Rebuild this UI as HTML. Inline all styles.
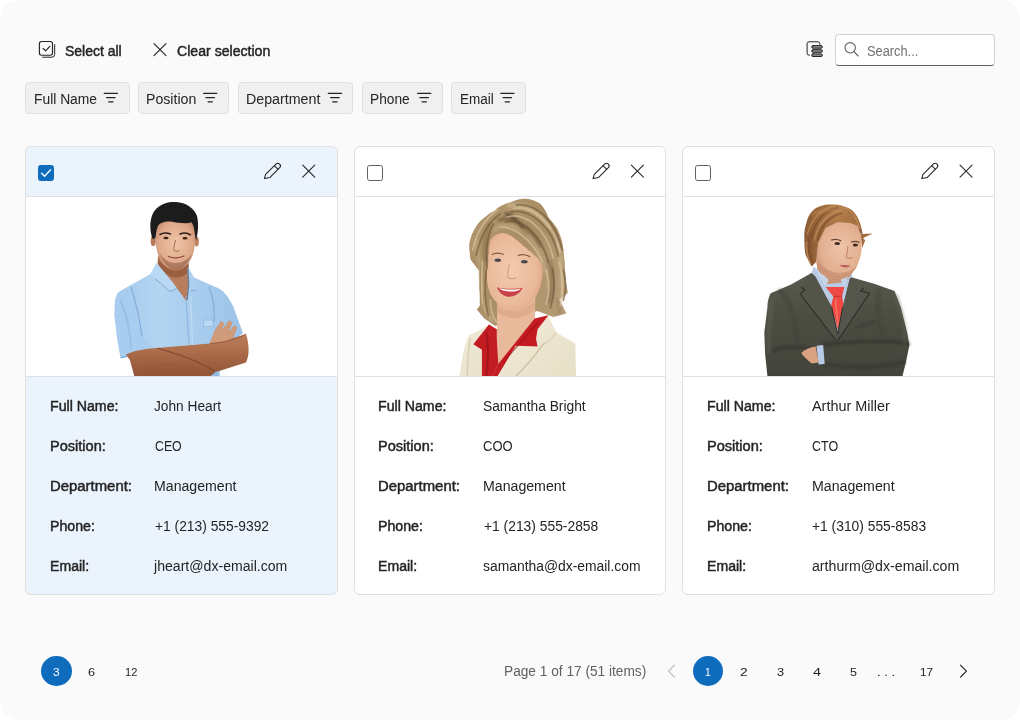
<!DOCTYPE html><html lang="en"><head><meta charset="utf-8"><title>CardView</title><style>
html,body{margin:0;padding:0;background:#fff}
body{width:1020px;height:720px;overflow:hidden;position:relative;font-family:'Liberation Sans', sans-serif}
.page{position:absolute;left:0;top:0;width:1020px;height:720px;background:#fafafa;border-radius:20px}
.t{position:absolute;white-space:nowrap;font-size:14px;line-height:20px;transform-origin:0 50%;font-weight:normal}
.t.b{-webkit-text-stroke:0.45px #242424}
.t.s{font-size:11.5px}
.chip{position:absolute;top:82px;height:30px;background:#f0f0f0;border:1px solid #e0e0e0;border-radius:4px}
.search{position:absolute;left:835px;top:34px;width:158px;height:30px;background:#fff;border:1px solid #d1d1d1;border-bottom-color:#616161;border-radius:4px}
.card{position:absolute;top:146px;width:310.67px;height:447px;background:#fff;border:1px solid #e0e0e0;border-radius:6px;overflow:hidden}
.card.sel{background:#ebf3fc}
.card .img{position:absolute;left:0;top:49px;width:100%;height:179px;background:#fff;border-top:1px solid #e0e0e0;border-bottom:1px solid #e0e0e0}
.cb{position:absolute;top:165px;width:14px;height:14px;border:1px solid #616161;border-radius:2.5px;background:#fff}
.cb.on{background:#0f6cbd;border-color:#0f6cbd}
.dot{position:absolute;background:#0f6cbd;border-radius:50%}
svg.ov{position:absolute;left:0;top:0;width:1020px;height:720px;overflow:visible}
</style></head><body><div class="page">
<div class="toolbar">
<span class="t b" style="left:65.35px;top:40.85px;transform:scaleX(0.9973);color:#242424">Select all</span>
<span class="t b" style="left:177.40px;top:40.85px;transform:scaleX(1.0077);color:#242424">Clear selection</span>
<div class="search"></div>
<span class="t" style="left:867.21px;top:41.35px;transform:scaleX(0.9148);color:#707070">Search...</span>
</div>
<div class="header-panel">
<div class="chip" style="left:25.3px;width:102.3px"></div>
<div class="chip" style="left:138.2px;width:88.6px"></div>
<div class="chip" style="left:237.5px;width:113.5px"></div>
<div class="chip" style="left:361.8px;width:79.0px"></div>
<div class="chip" style="left:451.4px;width:73.0px"></div>
<span class="t" style="left:33.71px;top:88.75px;transform:scaleX(0.9880);color:#242424">Full Name</span>
<span class="t" style="left:145.89px;top:88.75px;transform:scaleX(1.0104);color:#242424">Position</span>
<span class="t" style="left:245.88px;top:88.75px;transform:scaleX(1.0167);color:#242424">Department</span>
<span class="t" style="left:370.22px;top:88.75px;transform:scaleX(0.9795);color:#242424">Phone</span>
<span class="t" style="left:459.83px;top:88.75px;transform:scaleX(0.9667);color:#242424">Email</span>
</div>
<div class="cards">
<div class="card sel" style="left:25.00px"><div class="img"><svg viewBox="26.00 197 310.67 179" width="310.67" height="179" style="position:absolute;left:0;top:0;display:block"><defs>
<filter id="b0" x="-5%" y="-5%" width="110%" height="110%"><feGaussianBlur stdDeviation="0.45"/></filter>
<filter id="b0s" x="-20%" y="-20%" width="140%" height="140%"><feGaussianBlur stdDeviation="1.6"/></filter>
<linearGradient id="sh0" x1="0" y1="0" x2="1" y2="0"><stop offset="0" stop-color="#a4c9ec"/><stop offset="0.35" stop-color="#b4d5f2"/><stop offset="0.7" stop-color="#a6cbed"/><stop offset="1" stop-color="#9cc3e8"/></linearGradient>
<linearGradient id="sk0" x1="0" y1="0" x2="0" y2="1"><stop offset="0" stop-color="#c48a67"/><stop offset="0.55" stop-color="#ad6d4b"/><stop offset="1" stop-color="#8f5236"/></linearGradient>
<radialGradient id="fc0" cx="0.5" cy="0.45" r="0.6"><stop offset="0" stop-color="#efc5a8"/><stop offset="0.7" stop-color="#dfa98a"/><stop offset="1" stop-color="#c18968"/></radialGradient>
</defs><g filter="url(#b0)">
<!-- neck -->
<path d="M158 256L157.5 264L173.3 284L186.5 302.5L189 286L188.5 256Z" fill="#b97c5b"/>
<path d="M158 258C166 272 182 274 188.5 262L188.5 272C180 281 168 279 159 267Z" fill="#8f5337" opacity=".7"/>
<!-- shirt body -->
<path d="M156.5 263L150.5 274L130 285.4L119 291.7C116 295 115 299 114.9 303L114.6 316L117 338L120.6 357.8L130 356L134.5 376.5H219.5L222 350L243 333L233 306C229 298 225 292 219 288.5L194 277.5L188 267L188.3 285L186.5 301.5L173.3 283.3Z" fill="url(#sh0)"/>
<!-- sleeve shading left -->
<path d="M129 287C133 300 138 318 141 336L156.5 349.7L120.6 357.8L114.6 316L114.9 303C116 296 121 290 129 287Z" fill="#a9cdee"/>
<path d="M131 287C136 303 140 320 142 337" stroke="#86b0dc" stroke-width="1.3" fill="none"/>
<path d="M120 300C126 312 130 330 131 350" stroke="#93bbe3" stroke-width="2" fill="none" opacity=".7"/>
<path d="M120.6 357.8L156.5 349.7" stroke="#7fa9d6" stroke-width="1.2" fill="none"/>
<!-- right sleeve seam -->
<path d="M209 287C213 297 215 310 214 322" stroke="#86b0dc" stroke-width="1.3" fill="none"/>
<!-- placket -->
<path d="M186 296C187 310 188 330 189 345" stroke="#8db6e0" stroke-width="1.1" fill="none"/>
<path d="M190.5 296C191 312 192 330 192.5 345" stroke="#c0dcf5" stroke-width="1.6" fill="none" opacity=".8"/>
<rect x="203.5" y="320" width="9.5" height="6.5" fill="#b9d8f3" stroke="#8fb7e0" stroke-width=".7"/>
<!-- collar -->
<path d="M156.5 263L173.3 283.3L176.8 288.5L170 291.5L155 278.5L150.5 274Z" fill="#b9d8f4"/>
<path d="M155 278.5L170 291.5L176.8 288.5" stroke="#7ea6d3" stroke-width=".9" fill="none"/>
<path d="M187.6 267L193.3 277.5L196.7 290L190.4 291L188.3 285Z" fill="#aecfee"/>
<path d="M187.8 268L188.6 285L187 300" stroke="#6f7f96" stroke-width="1.5" fill="none"/>
<path d="M196.700 290L190.400 291" stroke="#7ea6d3" stroke-width=".9" fill="none"/>
<!-- ears -->
<ellipse cx="153.3" cy="241" rx="2.6" ry="5.2" fill="#b8775a"/>
<ellipse cx="196.6" cy="241.5" rx="2.3" ry="5" fill="#c08262"/>
<!-- face -->
<path d="M155.5 226C155 240 156 252 160 259C164 266 170 270.5 175.5 270.5C181 270.5 187.5 266 191.5 258C195 251 196 238 195 225C190 219 160 219 155.5 226Z" fill="url(#fc0)"/>
<!-- beard shadow -->
<path d="M159 253C163 263 170 270.5 175.5 270.5C181 270.5 188 264 192 254C188 260 182 263 175.5 263C169 263 163 259 159 253Z" fill="#8a5a44" opacity=".55"/>
<!-- hair -->
<path d="M152.5 239C149 228 149.5 216 156 209C162 203 170 201.5 176 202C186 202.500 194 208 197 216C199 224 198 233 196 241L194.500 232C194 227 193 224 191.500 222.500C186 224 178 223 171 221.500C165 221 160 222.500 158 226C156.500 229 156 233 155.500 238Z" fill="#1d1c1b"/>
<!-- brows / eyes -->
<path d="M160 234.500C163 232.800 167 232.800 170.500 234" stroke="#2a1c16" stroke-width="1.5" fill="none" stroke-linecap="round"/>
<path d="M180 234C183.500 232.600 187.500 232.800 190.500 234.800" stroke="#2a1c16" stroke-width="1.5" fill="none" stroke-linecap="round"/>
<ellipse cx="166" cy="238" rx="2.6" ry="1.2" fill="#3a2519"/>
<ellipse cx="185" cy="238.300" rx="2.6" ry="1.2" fill="#3a2519"/>
<path d="M175.500 240C174.500 245 173.500 248 174 250.500C175.500 251.500 178 251.500 179.500 250.500" stroke="#a9684a" stroke-width="1" fill="none"/>
<path d="M168.500 256.500C172 258.300 180 258.300 184 256" stroke="#8e4a3a" stroke-width="1.3" fill="none" stroke-linecap="round"/>
<!-- arms -->
<path d="M126 354.400C135 350 150 348.500 157 348L209.800 343.500L215 330L221 321.500L224 323L221.500 331L229 320.500L232.500 322.500L228 333L234.500 325.500L237 327.500L233 338L246 334C249.500 345 249.500 356 246 362.500L216 372L210 376.500H134.500L129.800 360Z" fill="url(#sk0)"/>
<path d="M209.800 343.500L215 330L221 321.500L224 323L221.500 331L229 320.500L232.500 322.500L228 333L234.500 325.500L237 327.500L233 338L226 341Z" fill="#d09b7a"/>
<path d="M157 348C170 352 195 358 216 372" stroke="#7e452c" stroke-width="1.2" fill="none" opacity=".8"/>
<path d="M209.800 343.500C220 343 236 340 246 334" stroke="#8b5034" stroke-width="1" fill="none" opacity=".7"/>
<path d="M134.500 376.500C140 366 160 360 185 364C196 366 206 370 212 376.500Z" fill="#9a5938" opacity=".6"/>
<path d="M212 376.500L216 371L220 376.500Z" fill="#8fb8e2"/>
</g></svg></div></div>
<div class="cb on" style="left:38.00px"></div>
<span class="t b" style="left:49.69px;top:395.65px;transform:scaleX(1.0114);color:#242424">Full Name:</span>
<span class="t b" style="left:49.66px;top:435.75px;transform:scaleX(1.0396);color:#242424">Position:</span>
<span class="t b" style="left:49.64px;top:475.75px;transform:scaleX(1.0640);color:#242424">Department:</span>
<span class="t b" style="left:49.69px;top:515.75px;transform:scaleX(1.0130);color:#242424">Phone:</span>
<span class="t b" style="left:49.69px;top:555.85px;transform:scaleX(1.0068);color:#242424">Email:</span>
<span class="t" style="left:154.46px;top:395.65px;transform:scaleX(0.9788);color:#242424">John Heart</span>
<span class="t" style="left:154.54px;top:435.75px;transform:scaleX(0.8793);color:#242424">CEO</span>
<span class="t" style="left:154.49px;top:475.75px;transform:scaleX(1.0093);color:#242424">Management</span>
<span class="t" style="left:155.26px;top:515.75px;transform:scaleX(0.9864);color:#242424">+1 (213) 555-9392</span>
<span class="t" style="left:154.15px;top:555.85px;transform:scaleX(1.0065);color:#242424">jheart@dx-email.com</span>
<div class="card" style="left:353.67px"><div class="img"><svg viewBox="354.67 197 310.67 179" width="310.67" height="179" style="position:absolute;left:0;top:0;display:block"><defs>
<filter id="b1" x="-5%" y="-5%" width="110%" height="110%"><feGaussianBlur stdDeviation="0.5"/></filter>
<filter id="b1t" x="-20%" y="-20%" width="140%" height="140%"><feGaussianBlur stdDeviation="0.7"/></filter>
<filter id="b1s" x="-20%" y="-20%" width="140%" height="140%"><feGaussianBlur stdDeviation="1.4"/></filter>
<linearGradient id="hr1" x1="0" y1="0" x2="1" y2="1"><stop offset="0" stop-color="#b79b72"/><stop offset="0.45" stop-color="#a88c64"/><stop offset="1" stop-color="#b89e78"/></linearGradient>
<radialGradient id="fc1" cx="0.45" cy="0.5" r="0.65"><stop offset="0" stop-color="#f3cbaf"/><stop offset="0.7" stop-color="#e9b898"/><stop offset="1" stop-color="#d39c7c"/></radialGradient>
<linearGradient id="jk1" x1="0" y1="0" x2="1" y2="1"><stop offset="0" stop-color="#f1ecdb"/><stop offset="1" stop-color="#e6dfc6"/></linearGradient>
</defs><g filter="url(#b1)">
<!-- back hair -->
<path d="M525.4 198.700C531 199.500 536 201 539.4 203.600C543 207 546 212 548 217.600C551 221 554 224.500 556.700 228.400C560 236 562.500 247 563.900 258.700L565.5 281L567.5 293L559 299.500L566 313.600L553 317L537 311L495 326L484 318.400L476.500 309.500L479.500 305.800L479.200 280.700L479 271L470.400 259.600C469.300 254 469 248 469.300 242.400C470.500 237 472.500 232 474.700 228.400C478 223 481 220 484.400 217.600L494 211L497.400 207.900C502 205 506 203.500 510.300 202.500C515 200 520 198.800 525.400 198.700Z" fill="url(#hr1)"/>
<!-- neck & chest -->
<path d="M497 298L535 296L534.5 318.400L498 364.500L496.500 339Z" fill="#e8ba9b"/>
<path d="M497 304C505 314 522 314 535 300L534.500 309C523 321 506 320 497 312Z" fill="#d9a283" opacity=".6"/>
<!-- face -->
<path d="M487 250C485 268 486 283 489.500 293C496 305 505 311 514 310.500C523 310 532.500 303 537.500 293C542 284 543.500 270 542 258L530 244L512 232L498 230L488 238Z" fill="url(#fc1)"/>
<!-- eyes brows mouth -->
<path d="M491.500 254.500C495 252.800 500 252.800 503.500 254.500" stroke="#7c5a3e" stroke-width="1.200" fill="none"/>
<path d="M517.500 255.500C521 254 526.500 254.500 530 257" stroke="#7c5a3e" stroke-width="1.200" fill="none"/>
<ellipse cx="497.500" cy="260.300" rx="3.300" ry="1.700" fill="#4d4a50"/>
<ellipse cx="524" cy="261.800" rx="3.400" ry="1.700" fill="#4d4a50"/>
<path d="M509 264C508 270 506.500 275 507.500 277.500C510 279 514 279 516 277.500" stroke="#d59f83" stroke-width="1.100" fill="none"/>
<path d="M496.500 287.300C503 289 515 289.500 522.400 287.800C519 295 512 297.500 506.500 296.500C502 295.500 498.500 292 496.500 287.300Z" fill="#c9414a"/>
<path d="M498.500 288.300C505 289.700 514 290 520.500 288.700C517.500 292.500 503 292.800 498.500 288.300Z" fill="#fbf6f0"/>
<!-- fringe / front hair -->
<path d="M474.700 228.400C478 223 481 220 484.400 217.600C488 214 491 212 494 211L497.400 207.900C502 205 506 203.500 510.300 202.500C515 200 520 198.800 525.400 198.700C531 199.500 536 201 539.400 203.600C543 207 546 212 548 217.600C551 221 554 224.500 556.700 228.400C559 233 561 238 562 242.400C563 248 563.500 253 563.900 258.700L565.500 284L546 292C543.500 284 544 274 542.500 267C541 262 538 258 534 255.300C531 252 528 250 525.400 247.800C521 244 517 240 512.500 237C508 234 504 232.500 500.600 233C496 234 492 236.500 490 240C489 244 488.500 248 488.500 252C487.500 258 486.500 266 486.500 274C486.300 280 486.500 286 487.500 292L479.200 291L479 271L470.400 259.600C469.300 254 469 248 469.300 242.400C470.500 237 472.500 232 474.700 228.400Z" fill="url(#hr1)"/>
<!-- hair shading strokes -->
<g fill="none" stroke-linecap="round" filter="url(#b1s)">
<path d="M506 214C512 216 518 221 522 228" stroke="#2f261d" stroke-width="3" opacity=".75"/>
<path d="M499 220C510 216 528 224 540 246" stroke="#6f5639" stroke-width="3.500" opacity=".7"/>
<path d="M489 224C485 236 483 250 486 262" stroke="#7f6443" stroke-width="3" opacity=".6"/>
<path d="M549 262C553 275 553 290 549 302" stroke="#7d6245" stroke-width="4" opacity=".6"/>
<path d="M508 206C520 203 537 210 549 228" stroke="#d6c19a" stroke-width="3" opacity=".75"/>
<path d="M476 240C477 255 481 270 482 292" stroke="#ccb48c" stroke-width="2.500" opacity=".7"/>
<path d="M557 243C561 262 563 282 562 300" stroke="#cfb992" stroke-width="3" opacity=".7"/>
<path d="M494 230C501 224 512 224 521 231" stroke="#c9b088" stroke-width="3" opacity=".6"/>
<path d="M528 236C536 244 542 256 545 272" stroke="#cdb68e" stroke-width="2.500" opacity=".6"/>
<path d="M483 296C482 305 485 313 492 321" stroke="#d2bc96" stroke-width="2.500" opacity=".7"/>
<path d="M556 300C560 306 561 310 558 314" stroke="#8a6e4b" stroke-width="2" opacity=".6"/>
</g>
<g fill="none" stroke-linecap="round" filter="url(#b1t)" opacity=".6">
<g stroke="#6f5538" stroke-width="1.800">
<path d="M505 222C520 218 540 232 548 262"/><path d="M510 212C530 208 552 226 558 256"/><path d="M516 205C536 203 555 220 562 250"/>
<path d="M500 214C490 220 480 235 476 255"/><path d="M493 224C487 235 485 250 487 268"/><path d="M486 270C484 285 484 300 488 316"/>
<path d="M552 268C555 282 554 296 550 308"/><path d="M563 270C566 282 566 292 563 300"/><path d="M481.500 264C480.500 275 481 292 483 304"/>
</g>
<g stroke="#dcc9a3" stroke-width="1.800">
<path d="M507 217C525 212 546 228 553 258"/><path d="M513 208.500C532 205 553 222 560 252"/><path d="M500 227C515 227 532 240 542 262"/>
<path d="M497 210C486 217 476 232 472.500 250"/><path d="M482 262C481 275 481 290 482.500 304"/><path d="M559 262C563 278 563 292 560 306"/>
<path d="M546 270C549 282 549 294 546 304"/><path d="M490 300C490 308 492 316 496 322"/>
</g></g>
<!-- jacket -->
<path d="M490 324.600L468.200 335.600C464 345 461.500 358 460.400 370L458.800 376.500H481.600V349.700L473 344.200L488.600 324.600Z" fill="url(#jk1)"/>
<path d="M549.800 320L556 332.500L575 343.500L575.700 376.500H497L515.300 345.800L537.300 346.600L535.700 338.700L537.300 329.300L548.200 315.200Z" fill="url(#jk1)"/>
<path d="M543 344C536 354 526 366 515.500 376.500" stroke="#c9bf9d" stroke-width="1.300" fill="none"/>
<path d="M556 332.500C552 338 548 342 543 344" stroke="#cfc5a4" stroke-width="1" fill="none"/>
<path d="M470 338C468 350 467 364 467 376" stroke="#d9d0b3" stroke-width="1.500" fill="none"/>
<!-- red collar -->
<path d="M488.600 324.600L496.500 329.300L496.500 338.700L498 364L491.800 376.500H481.600V349.700L473 344.200Z" fill="#c31a21"/>
<path d="M548.200 315.200L534.300 318.400L498 363.800L491.800 376.500H497L515.300 345.800L537.300 346.600L535.700 338.700L537.300 329.300Z" fill="#c51b22"/>
<path d="M486 332C488 345 488 362 486 376" stroke="#98121a" stroke-width="2" fill="none" opacity=".7"/>
<path d="M538 322C528 334 515 348 503 362" stroke="#9c131b" stroke-width="1.600" fill="none" opacity=".6"/>
</g></svg></div></div>
<div class="cb" style="left:366.67px"></div>
<span class="t b" style="left:378.36px;top:395.65px;transform:scaleX(1.0114);color:#242424">Full Name:</span>
<span class="t b" style="left:378.33px;top:435.75px;transform:scaleX(1.0396);color:#242424">Position:</span>
<span class="t b" style="left:378.31px;top:475.75px;transform:scaleX(1.0640);color:#242424">Department:</span>
<span class="t b" style="left:378.36px;top:515.75px;transform:scaleX(1.0130);color:#242424">Phone:</span>
<span class="t b" style="left:378.36px;top:555.85px;transform:scaleX(1.0068);color:#242424">Email:</span>
<span class="t" style="left:483.16px;top:395.65px;transform:scaleX(0.9845);color:#242424">Samantha Bright</span>
<span class="t" style="left:483.20px;top:435.75px;transform:scaleX(0.9279);color:#242424">COO</span>
<span class="t" style="left:483.19px;top:475.75px;transform:scaleX(1.0105);color:#242424">Management</span>
<span class="t" style="left:483.86px;top:515.75px;transform:scaleX(0.9882);color:#242424">+1 (213) 555-2858</span>
<span class="t" style="left:483.40px;top:555.85px;transform:scaleX(0.9911);color:#242424">samantha@dx-email.com</span>
<div class="card" style="left:682.34px"><div class="img"><svg viewBox="683.34 197 310.67 179" width="310.67" height="179" style="position:absolute;left:0;top:0;display:block"><defs>
<filter id="b2" x="-5%" y="-5%" width="110%" height="110%"><feGaussianBlur stdDeviation="0.5"/></filter>
<filter id="b2t" x="-20%" y="-20%" width="140%" height="140%"><feGaussianBlur stdDeviation="0.7"/></filter>
<filter id="b2s" x="-20%" y="-20%" width="140%" height="140%"><feGaussianBlur stdDeviation="1.800"/></filter>
<linearGradient id="st2" x1="0" y1="0" x2="0" y2="1"><stop offset="0" stop-color="#595a4e"/><stop offset="0.4" stop-color="#4d4e43"/><stop offset="1" stop-color="#42433a"/></linearGradient>
<linearGradient id="hr2" x1="0" y1="0" x2="1" y2="0"><stop offset="0" stop-color="#8a5a34"/><stop offset="0.5" stop-color="#b17a49"/><stop offset="1" stop-color="#9a683c"/></linearGradient>
<radialGradient id="fc2" cx="0.55" cy="0.45" r="0.65"><stop offset="0" stop-color="#efc4a8"/><stop offset="0.7" stop-color="#e2ae90"/><stop offset="1" stop-color="#c48b6b"/></radialGradient>
</defs><g filter="url(#b2)">
<!-- shirt -->
<path d="M814 266L811 277L832 307L838 334L843.500 307.400L853 278L851 268L841 280L822 277Z" fill="#b9cbe4"/>
<!-- neck -->
<path d="M817 262L818 272L828 284L846 282L856 268L857 260Z" fill="#c99376"/>
<!-- tie -->
<path d="M825.900 287L844.700 287L842.400 296.400L843.900 304.200L838.400 330L831.400 305.800L833.700 296.400Z" fill="#ee4a42"/>
<path d="M833.700 296.400L842.400 296.400" stroke="#c4352f" stroke-width="1" fill="none"/>
<path d="M836 299C836.500 308 837.500 318 838.400 326" stroke="#f8786b" stroke-width="2" fill="none" opacity=".7"/>
<!-- collar tips -->
<path d="M815 268L825.900 286.500L829 280L820 270Z" fill="#c6d5ea"/>
<path d="M851 270L844.700 286.500L841 280L847 272Z" fill="#c2d2e8"/>
<!-- suit -->
<path d="M811.800 272.900L791.400 284.600L771 293.300C768.500 298 767.800 303 767.800 307.400L764.700 332.500L765.500 354.400L767.800 376.500H902.700L905.900 363.800L909.800 345L907.500 332.500L901.200 307.400L894.900 290.900L874.500 283.800L852.500 277.600L850.200 278.400L843 307.400L838 334L832 307L815.700 276.800Z" fill="url(#st2)"/>
<!-- lapels -->
<path d="M811.800 272.900L801.600 287L805 290L800.500 294L836.900 341L838 334L832 307L815.700 276.800Z" fill="#535449"/>
<path d="M852.500 277.600L864 288L861 291L869.800 293.300L838.400 340L838 334L843 307.400L850.200 278.400Z" fill="#55564b"/>
<path d="M801.600 287L805 290L800.500 294L836.900 341" stroke="#2d2e28" stroke-width="1.100" fill="none"/>
<path d="M864 288L861 291L869.800 293.300L838.400 340" stroke="#2d2e28" stroke-width="1.100" fill="none"/>
<path d="M832 307L838 334L843 307.400" stroke="#2a2b25" stroke-width="1" fill="none"/>
<!-- arms shading -->
<g fill="none" filter="url(#b2s)" stroke-linecap="round">
<path d="M822.700 345C850 341 885 340 909 343.500" stroke="#2c2d27" stroke-width="2.500" opacity=".8"/>
<path d="M770 352C785 346 800 346 812 350" stroke="#2c2d27" stroke-width="2.500" opacity=".7"/>
<path d="M824 364C850 368 880 368 905 362" stroke="#2e2f29" stroke-width="2.500" opacity=".7"/>
<path d="M772 300C770 315 768 335 769 352" stroke="#5d5e52" stroke-width="4" opacity=".6"/>
<path d="M896 296C902 312 905 328 906 342" stroke="#5a5b50" stroke-width="4" opacity=".5"/>
<path d="M856 328C863 325 870 323 876 321.500" stroke="#2f302a" stroke-width="1.500" opacity=".8"/>
<path d="M780 290C790 300 796 320 798 345" stroke="#3a3b33" stroke-width="3" opacity=".5"/>
<path d="M880 290C876 305 878 325 886 340" stroke="#3a3b33" stroke-width="3" opacity=".5"/>
</g>
<!-- hand + cuff -->
<path d="M801.600 352.900C806 349 811 347 816 346.500L819 362.500L812 363.500C808 360 804 356.500 801.600 352.900Z" fill="#d9a283"/>
<path d="M816.800 345.800L823.500 345L825 364L819 364.500Z" fill="#b9cbe4"/>
<!-- face -->
<path d="M816.500 245L816.500 251C816 258 817 265 818 269.700C822 276 832 279.500 841.600 279C849 278 854 272 857.300 266.600C860 260 862 253 862 247.800L861 234L858 226L850 223L838 222.500L826 228L818.500 243Z" fill="url(#fc2)"/>
<path d="M818 262C822 272 832 279.500 841.600 279C849 278 854 272 857.300 266.600C852 271 846 273 840 273C832 273 824 269 818 262Z" fill="#c48b6b" opacity=".6"/>
<!-- eyes etc -->
<path d="M831.500 240.200C834.500 239 838.500 239.200 841.500 240.800" stroke="#6b4a33" stroke-width="1.300" fill="none"/>
<path d="M851.500 242.200C854 241 857.500 241.200 860 242.500" stroke="#6b4a33" stroke-width="1.300" fill="none"/>
<ellipse cx="837.600" cy="243.600" rx="2.800" ry="1.500" fill="#3d2c22"/>
<ellipse cx="855.700" cy="245" rx="2.600" ry="1.500" fill="#3d2c22"/>
<path d="M848 246C848.500 251 847 255 846.500 257C848 258.500 851 258.500 853 257.500" stroke="#c48b6b" stroke-width="1.100" fill="none"/>
<path d="M840 265.300C843 264.600 848 264.800 851 266C848 268 843 268 840 265.300Z" fill="#b9615a"/>
<!-- hair -->
<path d="M833.700 204.600C826 204 819 206 815 209C810 213 808 218 807 222C805 228 804.500 233 804.700 238.400C804.700 246 805 251 806 255L811.800 266.600L816.500 262L817.500 250L818.500 243L826 228L838 222.500L850 223L858 226L861 234L862.500 248L865.500 240.500L863.500 238L873 233.400L863 234C862 226 859 217 854 211.700C848 206.500 840 204.500 833.700 204.600Z" fill="url(#hr2)"/>
<g fill="none" stroke-linecap="round" filter="url(#b2t)" opacity=".55">
<g stroke="#6e4424" stroke-width="1.600"><path d="M838 208C826 210 815 220 812 238"/><path d="M842 213C830 216 821 226 818 240"/><path d="M809 240C808 250 810 258 813 264"/><path d="M846 209C854 213 859 222 861 232"/></g>
<g stroke="#d09a63" stroke-width="1.600"><path d="M836 206C824 207 812 217 808 234"/><path d="M841 211C829 213 818 223 815 240"/><path d="M807 242C806 250 808 257 811 263"/><path d="M843 207C851 210 857 218 860 228"/></g>
</g>
<path d="M812 215C820 210 835 208 848 212" stroke="#c08a57" stroke-width="2.500" fill="none" opacity=".7" filter="url(#b2s)"/>
<path d="M810 232C809 245 810 255 813 262" stroke="#7a4d2b" stroke-width="3" fill="none" opacity=".6" filter="url(#b2s)"/>
</g></svg></div></div>
<div class="cb" style="left:695.34px"></div>
<span class="t b" style="left:707.02px;top:395.65px;transform:scaleX(1.0114);color:#242424">Full Name:</span>
<span class="t b" style="left:706.99px;top:435.75px;transform:scaleX(1.0396);color:#242424">Position:</span>
<span class="t b" style="left:706.97px;top:475.75px;transform:scaleX(1.0640);color:#242424">Department:</span>
<span class="t b" style="left:707.02px;top:515.75px;transform:scaleX(1.0130);color:#242424">Phone:</span>
<span class="t b" style="left:707.02px;top:555.85px;transform:scaleX(1.0068);color:#242424">Email:</span>
<span class="t" style="left:812.20px;top:395.65px;transform:scaleX(1.0299);color:#242424">Arthur Miller</span>
<span class="t" style="left:811.83px;top:435.75px;transform:scaleX(0.8929);color:#242424">CTO</span>
<span class="t" style="left:811.79px;top:475.75px;transform:scaleX(1.0105);color:#242424">Management</span>
<span class="t" style="left:812.46px;top:515.75px;transform:scaleX(0.9873);color:#242424">+1 (310) 555-8583</span>
<span class="t" style="left:811.99px;top:555.85px;transform:scaleX(1.0107);color:#242424">arthurm@dx-email.com</span>
</div>
<div class="pager">
<div class="dot" style="left:41.2px;top:656px;width:30.6px;height:30px"></div>
<div class="dot" style="left:693.3px;top:656.2px;width:30px;height:30px"></div>
<span class="t s" style="left:52.98px;top:661.90px;transform:scaleX(1.0364);color:#ffffff">3</span>
<span class="t s" style="left:88.25px;top:661.90px;transform:scaleX(1.1091);color:#242424">6</span>
<span class="t s" style="left:125.18px;top:661.90px;transform:scaleX(0.9652);color:#242424">12</span>
<span class="t" style="left:504.12px;top:660.55px;transform:scaleX(0.9774);color:#616161">Page 1 of 17 (51 items)</span>
<span class="t s" style="left:705.23px;top:661.90px;transform:scaleX(0.8952);color:#ffffff">1</span>
<span class="t s" style="left:739.80px;top:661.90px;transform:scaleX(1.2000);color:#242424">2</span>
<span class="t s" style="left:776.55px;top:661.90px;transform:scaleX(1.1091);color:#242424">3</span>
<span class="t s" style="left:812.79px;top:661.90px;transform:scaleX(1.2522);color:#242424">4</span>
<span class="t s" style="left:849.95px;top:661.90px;transform:scaleX(1.0909);color:#242424">5</span>
<span class="t s" style="left:877.36px;top:661.90px;transform:scaleX(1.1357);color:#242424">. . .</span>
<span class="t s" style="left:919.54px;top:661.90px;transform:scaleX(1.0174);color:#242424">17</span>
</div>
<svg class="ov" viewBox="0 0 1020 720"><g fill="none" stroke="#242424" stroke-width="1" stroke-linecap="round" stroke-linejoin="round">
<rect x="39.4" y="41.5" width="13.1" height="13.7" rx="2.2" stroke-width="1.15"/>
<path d="M54.7 44.6V54.4a2.8 2.8 0 0 1 -2.8 2.8H42.6"/>
<path d="M43.1 48.4l2.5 2.4l4.2 -4.5" stroke-width="1.2"/>
<path d="M154 43.6l12 12M166 43.6l-12 12" stroke-width="1.1"/>
</g>
<g fill="none" stroke="#242424" stroke-width="1.2" stroke-linecap="round">
<path d="M104.25 93.4h13.2M106.55 97.6h8.6M108.65 101.8h4.4"/>
<path d="M203.60 93.4h13.2M205.90 97.6h8.6M208.00 101.8h4.4"/>
<path d="M328.30 93.4h13.2M330.60 97.6h8.6M332.70 101.8h4.4"/>
<path d="M417.60 93.4h13.2M419.90 97.6h8.6M422.00 101.8h4.4"/>
<path d="M500.75 93.4h13.2M503.05 97.6h8.6M505.15 101.8h4.4"/>
</g>
<g fill="none" stroke="#242424" stroke-width="1" stroke-linecap="round">
<path d="M809.6 55.1H809a1.9 1.9 0 0 1 -1.9 -1.9V43.7a1.9 1.9 0 0 1 1.9 -1.9H818a1.9 1.9 0 0 1 1.9 1.9V44.4"/>
<rect x="811.7" y="45.6" width="10.7" height="2.6" rx="1.3" fill="#8a8a8a"/>
<rect x="811.7" y="49.7" width="10.7" height="2.6" rx="1.3" fill="#8a8a8a"/>
<rect x="811.7" y="53.9" width="10.7" height="2.6" rx="1.3" fill="#8a8a8a"/>
</g>
<g fill="none" stroke="#616161" stroke-width="1.1" stroke-linecap="round"><circle cx="850.2" cy="47.8" r="5.2"/><path d="M854 51.7l4.1 4.3"/></g>
<g transform="translate(0.00 0)" fill="none" stroke="#242424" stroke-width="1.05" stroke-linecap="round" stroke-linejoin="round">
<path d="M264.4 178.6L265.6 174.4L275.96 164.06A2.6 2.6 0 0 1 279.64 167.74L270 177.4Z"/>
<path d="M274.4 165.7L278 169.3"/>
<path d="M302.7 165.1l12 12M314.7 165.1l-12 12"/>
</g>
<g transform="translate(328.67 0)" fill="none" stroke="#242424" stroke-width="1.05" stroke-linecap="round" stroke-linejoin="round">
<path d="M264.4 178.6L265.6 174.4L275.96 164.06A2.6 2.6 0 0 1 279.64 167.74L270 177.4Z"/>
<path d="M274.4 165.7L278 169.3"/>
<path d="M302.7 165.1l12 12M314.7 165.1l-12 12"/>
</g>
<g transform="translate(657.34 0)" fill="none" stroke="#242424" stroke-width="1.05" stroke-linecap="round" stroke-linejoin="round">
<path d="M264.4 178.6L265.6 174.4L275.96 164.06A2.6 2.6 0 0 1 279.64 167.74L270 177.4Z"/>
<path d="M274.4 165.7L278 169.3"/>
<path d="M302.7 165.1l12 12M314.7 165.1l-12 12"/>
</g>
<path d="M41.6 173.2l3 3l6 -6.4" fill="none" stroke="#fff" stroke-width="1.3" stroke-linecap="round" stroke-linejoin="round"/>
<path d="M674.4 665.1l-5.9 6l5.9 6" fill="none" stroke="#bdbdbd" stroke-width="1.2" stroke-linecap="round" stroke-linejoin="round"/>
<path d="M960.5 665.1l5.9 6l-5.9 6" fill="none" stroke="#242424" stroke-width="1.2" stroke-linecap="round" stroke-linejoin="round"/></svg>
</div></body></html>
